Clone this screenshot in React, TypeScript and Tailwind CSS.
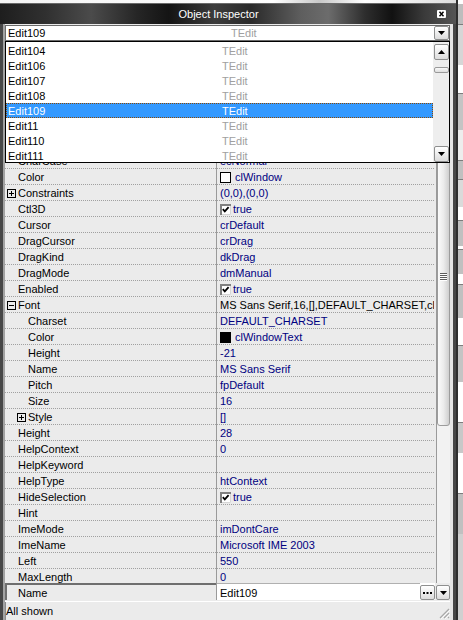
import React from "react";

type Row = {
  label: string;
  value?: string;
  sub?: boolean;
  box?: "plus" | "minus";
  kind?: "check" | "white" | "black";
  plain?: boolean;
};

const rows: Row[] = [
  { label: "AutoSize", value: "true", kind: "check" },
  { label: "BevelEdges", value: "[beLeft,beTop,beRight,beBottom]", box: "plus" },
  { label: "BevelInner", value: "bvRaised" },
  { label: "BevelKind", value: "bkNone" },
  { label: "BevelOuter", value: "bvLowered" },
  { label: "BiDiMode", value: "bdLeftToRight" },
  { label: "BorderStyle", value: "bsSingle" },
  { label: "CharCase", value: "ecNormal" },
  { label: "Color", value: "clWindow", kind: "white" },
  { label: "Constraints", value: "(0,0),(0,0)", box: "plus" },
  { label: "Ctl3D", value: "true", kind: "check" },
  { label: "Cursor", value: "crDefault" },
  { label: "DragCursor", value: "crDrag" },
  { label: "DragKind", value: "dkDrag" },
  { label: "DragMode", value: "dmManual" },
  { label: "Enabled", value: "true", kind: "check" },
  { label: "Font", value: "MS Sans Serif,16,[],DEFAULT_CHARSET,clWindowText", box: "minus", plain: true },
  { label: "Charset", value: "DEFAULT_CHARSET", sub: true },
  { label: "Color", value: "clWindowText", sub: true, kind: "black" },
  { label: "Height", value: "-21", sub: true },
  { label: "Name", value: "MS Sans Serif", sub: true },
  { label: "Pitch", value: "fpDefault", sub: true },
  { label: "Size", value: "16", sub: true },
  { label: "Style", value: "[]", sub: true, box: "plus" },
  { label: "Height", value: "28" },
  { label: "HelpContext", value: "0" },
  { label: "HelpKeyword", value: "" },
  { label: "HelpType", value: "htContext" },
  { label: "HideSelection", value: "true", kind: "check" },
  { label: "Hint", value: "" },
  { label: "ImeMode", value: "imDontCare" },
  { label: "ImeName", value: "Microsoft IME 2003" },
  { label: "Left", value: "550" },
  { label: "MaxLength", value: "0" },
];

const components = ["Edit104", "Edit106", "Edit107", "Edit108", "Edit109", "Edit11", "Edit110", "Edit111"];

// other windows peeking out on the right edge
const strip: string[] = [
  "h-[4px] bg-white",
  "h-[20px] bg-[#bdbdbd]",
  "h-px bg-[#7c7c7c]",
  "h-[40px] bg-[#d6d6d6]",
  "h-[28px] bg-white",
  "h-px bg-[#7c7c7c]",
  "h-[36px] bg-[#c4c4c4]",
  "h-[30px] bg-[#ededed]",
  "h-px bg-[#7c7c7c]",
  "h-[18px] bg-[#c0c0c0]",
  "h-px bg-[#7c7c7c]",
  "h-[27px] bg-[#dadada]",
  "h-[13px] bg-white",
  "h-px bg-[#7c7c7c]",
  "h-[25px] bg-[#c0c0c0]",
  "h-[3px] bg-white",
  "h-px bg-[#7c7c7c]",
  "h-[24px] bg-[#c0c0c0]",
  "h-[10px] bg-white",
  "h-px bg-[#7c7c7c]",
  "h-[33px] bg-[#c0c0c0]",
  "h-[27px] bg-white",
  "h-px bg-[#7c7c7c]",
  "h-[36px] bg-[#c4c4c4]",
  "h-[40px] bg-white",
  "h-px bg-[#7c7c7c]",
  "h-[30px] bg-[#c8c8c8]",
  "h-[40px] bg-white",
  "h-px bg-[#7c7c7c]",
  "h-[40px] bg-[#c0c0c0]",
  "flex-1 bg-[#d0d0d0]",
];

function Tri({ up }: { up?: boolean }) {
  return (
    <svg width="7" height="4" viewBox="0 0 7 4">
      <path d={up ? "M0 4h7L3.5 0z" : "M0 0h7L3.5 4z"} fill="#000" />
    </svg>
  );
}

function ArrowBtn({ up, className }: { up?: boolean; className: string }) {
  return (
    <div
      className={`flex shrink-0 items-center justify-center rounded-[2px] border border-[#8e8f8f] bg-[linear-gradient(180deg,#ffffff,#f0f0f0_45%,#dcdcdc)] ${className}`}
    >
      <Tri up={up} />
    </div>
  );
}

function ExpandBox({ minus }: { minus?: boolean }) {
  return (
    <svg width="9" height="9" viewBox="0 0 9 9" className="shrink-0">
      <rect x="0.5" y="0.5" width="8" height="8" fill="none" stroke="#000" />
      <path d="M2 4.5h5" stroke="#000" />
      {!minus && <path d="M4.5 2v5" stroke="#000" />}
    </svg>
  );
}

function Check() {
  return (
    <svg width="11" height="11" viewBox="0 0 11 11" className="shrink-0">
      <rect x="0" y="0" width="11" height="11" fill="#fff" />
      <path d="M0 10.5h10.5V0" fill="none" stroke="#d6d6d6" />
      <path d="M1 11V1h10" fill="none" stroke="#808080" strokeWidth="2" />
      <path d="M2.8 5.2l2 2.2 3.8-4.2" fill="none" stroke="#000" strokeWidth="1.8" />
    </svg>
  );
}

function PropRow({ row, last }: { row: Row; last: boolean }) {
  const line = last ? "" : "border-b border-dotted border-[#a0a0a0]";
  let indent = "pl-[13px]";
  if (row.box) indent = row.sub ? "pl-[12px]" : "pl-[2px]";
  else if (row.sub) indent = "pl-[23px]";
  return (
    <div className={`flex shrink-0 ${last ? "h-[14px]" : "h-[16px]"}`}>
      <div className={`flex w-[211px] shrink-0 items-center overflow-hidden whitespace-nowrap pt-[2px] ${indent} ${line}`}>
        {row.box && <ExpandBox minus={row.box === "minus"} />}
        <span className={row.box ? "ml-[2px]" : ""}>{row.label}</span>
      </div>
      <div className="w-px shrink-0 bg-[#9a9a9a]" />
      <div
        className={`flex min-w-0 flex-1 items-center overflow-hidden whitespace-nowrap pl-[3px] pt-[2px] ${line} ${
          row.plain ? "text-black" : "text-[#000080]"
        }`}
      >
        {row.kind === "check" && <Check />}
        {row.kind === "white" && <span className="h-[11px] w-[11px] shrink-0 border border-black bg-white" />}
        {row.kind === "black" && <span className="h-[11px] w-[11px] shrink-0 border border-black bg-black" />}
        <span className={row.kind === "check" ? "ml-[2px]" : row.kind ? "ml-[4px]" : ""}>{row.value}</span>
      </div>
    </div>
  );
}

function ComponentList() {
  return (
    <div className="absolute left-0 top-[17px] flex h-[122px] w-[445px] border border-black bg-white">
      <div className="flex min-w-0 flex-1 flex-col pt-px">
        {components.map((name) => {
          const sel = name === "Edit109";
          return (
            <div
              key={name}
              className={`flex h-[15px] shrink-0 items-center border pt-px ${
                sel ? "border-dotted border-[#8a4a08] bg-[#3399ff] text-white" : "border-transparent"
              }`}
            >
              <span className="w-[215px] shrink-0 pl-px">{name}</span>
              <span className={sel ? "text-white" : "text-[#a0a0a0]"}>TEdit</span>
            </div>
          );
        })}
      </div>
      <div className="flex w-[16px] shrink-0 flex-col bg-[#eeeeee] pl-px pt-[2px]">
        <ArrowBtn up className="h-[16px] w-[15px]" />
        <div className="mt-[7px] h-[6px] w-[15px] rounded-[2px] border border-[#9a9a9a] bg-[linear-gradient(180deg,#fafafa,#dedede)]" />
        <div className="flex-1" />
        <ArrowBtn className="h-[16px] w-[15px]" />
      </div>
    </div>
  );
}

function GridScrollBar() {
  return (
    <div className="flex w-[14px] shrink-0 flex-col border-l border-[#9a9a9a] bg-[#efefef]">
      <ArrowBtn up className="h-[15px] w-[13px]" />
      <div className="h-[72px] shrink-0" />
      <div className="flex h-[298px] shrink-0 items-center justify-center rounded-[3px] border border-[#9c9c9c] bg-[linear-gradient(90deg,#fbfbfb,#ececec_50%,#cfcfcf)]">
        <svg width="7" height="8" viewBox="0 0 7 8">
          <path d="M0 0.5h7M0 2.5h7M0 4.5h7M0 6.5h7" stroke="#5c5c5c" />
          <path d="M0 1.5h7M0 3.5h7M0 5.5h7M0 7.5h7" stroke="#ffffff" />
        </svg>
      </div>
      <div className="flex-1 bg-[#f2f2f2]" />
    </div>
  );
}

function NameRow() {
  return (
    <div className="flex h-[17px] shrink-0">
      <div className="flex w-[211px] shrink-0 items-center border-l-2 border-t-2 border-l-[#6e6e6e] border-t-[#6e6e6e] pl-[11px] pt-px">
        Name
      </div>
      <div className="w-px shrink-0 bg-[#9a9a9a]" />
      <div className="flex min-w-0 flex-1 items-center border-t border-[#b0b0b0] bg-white pl-[3px] pt-[2px]">Edit109</div>
      <div className="flex flex-col justify-end bg-white">
        <div className="flex h-[15px] w-[15px] items-center justify-center rounded-[2px] border border-[#8e8f8f] bg-[linear-gradient(180deg,#ffffff,#f0f0f0_45%,#dcdcdc)]">
          <svg width="9" height="2" viewBox="0 0 9 2">
            <path d="M0 0h2v2H0zM3.5 0h2v2h-2zM7 0h2v2H7z" fill="#000" />
          </svg>
        </div>
      </div>
      <div className="flex w-[15px] flex-col justify-end pl-px">
        <ArrowBtn className="h-[15px] w-[14px]" />
      </div>
    </div>
  );
}

export default function App() {
  return (
    <div className="flex h-[620px] w-[463px] overflow-hidden bg-[#d4d4d4] font-['Liberation_Sans',Arial,sans-serif] text-[11px] leading-none text-black">
      <div className="flex w-[456px] shrink-0 flex-col">
        <div className="h-[3px] shrink-0 bg-[linear-gradient(90deg,#f4f4f4,#ffffff_60%,#c8c8c8_70%,#ffffff_80%,#dcdcdc)]" />
        {/* title bar */}
        <div className="flex h-[21px] shrink-0 items-center border-t border-[#6a6a6a] bg-[linear-gradient(90deg,#1e1e1e_0%,#303030_10%,#4b4b4b_20%,#262626_30%,#141414_37%,#3c3c3c_47%,#2a2a2a_55%,#5e5e5e_66%,#6c6c6c_72%,#2e2e2e_80%,#111111_86%,#3a3a3a_93%,#555555_100%)]">
          <div className="w-[437px] shrink-0 text-center text-white">Object Inspector</div>
          <svg width="9" height="8" viewBox="0 0 9 8" className="shrink-0">
            <rect x="0" y="0" width="9" height="8" rx="1" fill="#fff" />
            <path d="M2.5 1.8l4 4.4M6.5 1.8l-4 4.4" stroke="#000" strokeWidth="1.4" />
          </svg>
        </div>
        {/* frame + body */}
        <div className="flex min-h-0 flex-1 bg-[#474747] pl-[3px] pr-[3px]">
          <div className="relative flex w-[447px] shrink-0 flex-col border-l-2 border-[#a2a2a2] bg-[#ebebeb]">
            {/* component selector */}
            <div className="h-[17px] shrink-0 pt-px">
              <div className="flex h-[16px] items-center border border-[#6a6a6a] bg-white">
                <span className="w-[225px] shrink-0 pl-[2px] pt-px">Edit109</span>
                <span className="pt-px text-[#a0a0a0]">TEdit</span>
                <ArrowBtn className="ml-auto mr-0 h-[14px] w-[15px]" />
              </div>
            </div>
            {/* property grid */}
            <div className="flex h-[542px] shrink-0">
              <div className="flex min-w-0 flex-1 flex-col overflow-hidden pr-[2px]">
                {rows.map((r, i) => (
                  <PropRow key={i} row={r} last={i === rows.length - 1} />
                ))}
              </div>
              <GridScrollBar />
            </div>
            <NameRow />
            <div className="h-[2px] shrink-0 border-b border-white" />
            <div className="flex h-[18px] shrink-0 items-center border-l border-[#8a8a8a] pt-px">
              <span>All shown</span>
              <svg width="12" height="12" viewBox="0 0 12 12" className="ml-auto mt-[3px]">
                <path d="M11 2L2 11M11 6L6 11M11 10L10 11" stroke="#a8a8a8" strokeWidth="1.2" />
                <path d="M12 3L3 12M12 7L7 12" stroke="#ffffff" strokeWidth="0.8" />
              </svg>
            </div>
            <ComponentList />
          </div>
          <div className="w-[3px] shrink-0 bg-[#e6e6e6]" />
        </div>
      </div>
      <div className="flex w-[7px] shrink-0 flex-col border-l-2 border-[#2e2e2e]">
        {strip.map((c, i) => (
          <div key={i} className={`shrink-0 ${c}`} />
        ))}
      </div>
    </div>
  );
}
